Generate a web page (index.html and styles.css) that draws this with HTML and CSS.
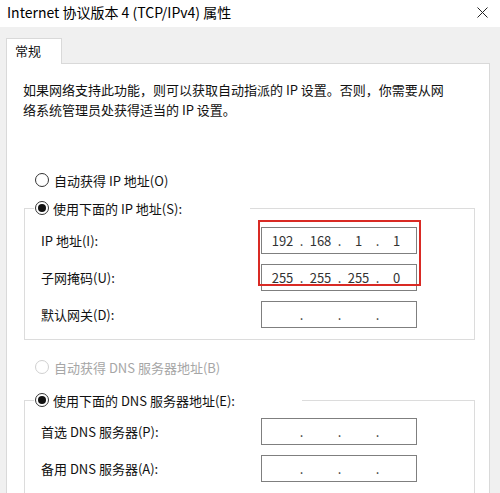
FILE: index.html
```html
<!DOCTYPE html>
<html lang="zh-CN">
<head>
<meta charset="utf-8">
<title>Internet 协议版本 4 (TCP/IPv4) 属性</title>
<link rel="stylesheet" href="styles.css">
</head>
<body>
<div class="window">
  <div class="titlebar">
    <span class="title">Internet 协议版本 4 (TCP/IPv4) 属性</span>
    <svg class="close" width="11" height="11" viewBox="0 0 11 11"><path d="M0.5 0.5 L10.5 10.5 M10.5 0.5 L0.5 10.5" stroke="#222" stroke-width="1" fill="none"/></svg>
  </div>
  <div class="body">
    <div class="tabs"><div class="tab">常规</div></div>
    <div class="panel">
      <p class="desc">如果网络支持此功能，则可以获取自动指派的 IP 设置。否则，你需要从网<br>络系统管理员处获得适当的 IP 设置。</p>

      <div class="radio-row first"><span class="radio"></span><span>自动获得 IP 地址(O)</span></div>

      <fieldset class="group">
        <legend class="legend legend-ip"><span class="radio checked"></span><span>使用下面的 IP 地址(S):</span></legend>
        <div class="rows">
          <div class="row"><span class="label">IP 地址(I):</span>
            <div class="ipbox"><span class="oct">192</span><span class="dot">.</span><span class="oct">168</span><span class="dot">.</span><span class="oct">1</span><span class="dot">.</span><span class="oct">1</span></div></div>
          <div class="row"><span class="label">子网掩码(U):</span>
            <div class="ipbox"><span class="oct">255</span><span class="dot">.</span><span class="oct">255</span><span class="dot">.</span><span class="oct">255</span><span class="dot">.</span><span class="oct">0</span></div></div>
          <div class="row"><span class="label">默认网关(D):</span>
            <div class="ipbox"><span class="oct"></span><span class="dot">.</span><span class="oct"></span><span class="dot">.</span><span class="oct"></span><span class="dot">.</span><span class="oct"></span></div></div>
          <div class="highlight"></div>
        </div>
      </fieldset>

      <div class="radio-row dns-auto disabled"><span class="radio"></span><span>自动获得 DNS 服务器地址(B)</span></div>

      <fieldset class="group group-dns">
        <legend class="legend legend-dns"><span class="radio checked"></span><span>使用下面的 DNS 服务器地址(E):</span></legend>
        <div class="rows rows-dns">
          <div class="row"><span class="label">首选 DNS 服务器(P):</span>
            <div class="ipbox"><span class="oct"></span><span class="dot">.</span><span class="oct"></span><span class="dot">.</span><span class="oct"></span><span class="dot">.</span><span class="oct"></span></div></div>
          <div class="row"><span class="label">备用 DNS 服务器(A):</span>
            <div class="ipbox"><span class="oct"></span><span class="dot">.</span><span class="oct"></span><span class="dot">.</span><span class="oct"></span><span class="dot">.</span><span class="oct"></span></div></div>
        </div>
      </fieldset>
    </div>
  </div>
</div>
</body>
</html>
```

FILE: styles.css
```css
* { box-sizing: border-box; }
html, body {
  margin: 0;
  padding: 0;
  width: 500px;
  height: 493px;
  overflow: hidden;
  background: #f0f0f0;
  font-family: "Noto Sans CJK SC", "Noto Sans", sans-serif;
  font-size: 13px;
  color: #111;
}
.window { width: 500px; height: 493px; overflow: hidden; }
.titlebar {
  height: 27px;
  background: #fff;
  display: flex;
  align-items: center;
  justify-content: space-between;
  padding: 0 12px 4px 7px;
}
.title { font-size: 14px; color: #000; line-height: 20px; }
.close { display: block; margin-top: 1px; }
.body { padding: 11px 10px 0 6px; }
.tabs { display: flex; height: 25px; }
.tab {
  position: relative;
  z-index: 1;
  width: 56px;
  height: 26px;
  background: #fff;
  border: 1px solid #d9d9d9;
  border-bottom: none;
  padding-left: 8px;
  line-height: 23px;
  font-size: 13px;
}
.panel {
  background: #fff;
  border: 1px solid #d9d9d9;
  height: 440px;
  padding: 0;
}
.desc {
  margin: 16px 0 0 16px;
  line-height: 20px;
  white-space: nowrap;
}
.radio-row {
  display: flex;
  align-items: center;
  gap: 5px;
  height: 20px;
  margin-left: 28px;
}
.radio-row.first { margin-top: 50px; }
.radio-row.dns-auto { margin-top: 17px; }
.radio {
  width: 14px;
  height: 14px;
  border: 1px solid #333;
  border-radius: 50%;
  background: #fff;
  display: inline-flex;
  align-items: center;
  justify-content: center;
  flex: none;
}
.radio.checked::after {
  content: "";
  width: 8px;
  height: 8px;
  border-radius: 50%;
  background: #111;
}
.disabled { color: #a6a6a6; }
.disabled .radio { border-color: #d0d0d0; }
.group {
  margin: 8px 0 0 17px;
  width: 451px;
  padding: 0;
  border: 1px solid #dcdcdc;
  min-inline-size: 0;
}
.group-dns { margin-top: 13px; border-bottom: none; height: 120px; }
.legend {
  display: flex;
  align-items: center;
  gap: 4px;
  height: 20px;
  margin-left: 9px;
  padding: 0 0 0 1px;
}
.legend-ip { width: 216px; }
.legend-dns { width: 268px; }
.rows {
  position: relative;
  padding: 9px 0 11px 16px;
  display: flex;
  flex-direction: column;
  gap: 10px;
}
.rows-dns { padding-top: 8px; }
.row { display: flex; align-items: center; height: 27px; }
.label { width: 220px; flex: none; }
.ipbox {
  width: 156px;
  height: 27px;
  border: 1px solid #7f7f7f;
  display: flex;
  align-items: center;
  padding-left: 4px;
  color: #333;
}
.oct { width: 33px; text-align: center; }
.dot { width: 5px; text-align: center; }
.highlight {
  position: absolute;
  left: 233px;
  top: 2px;
  width: 163px;
  height: 66px;
  border: 2px solid #d92a24;
}
```
